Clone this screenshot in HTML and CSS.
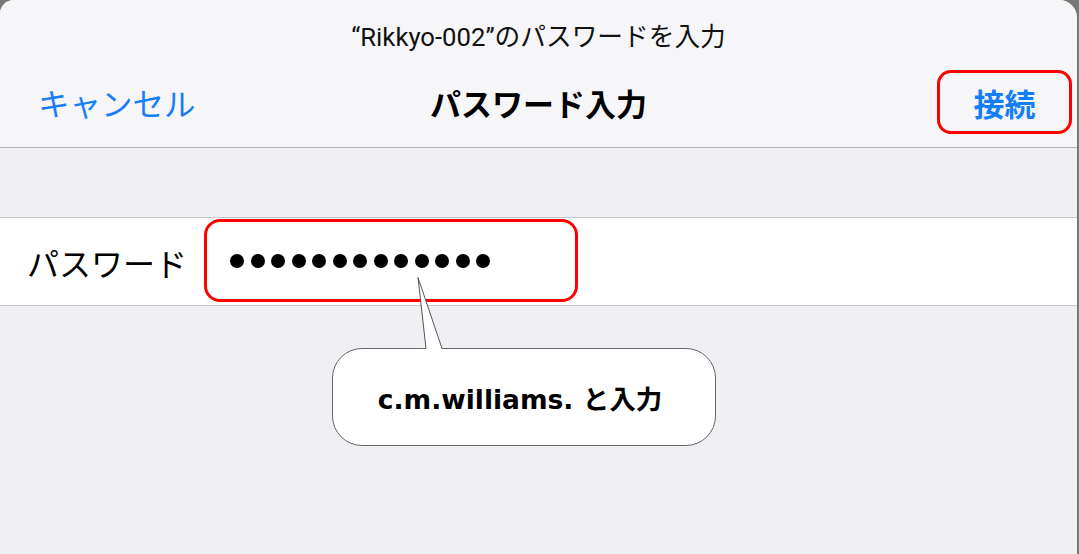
FILE: index.html
```html
<!DOCTYPE html>
<html lang="ja">
<head>
<meta charset="utf-8">
<title>パスワード入力</title>
<link rel="stylesheet" href="styles.css">
</head>
<body>
<div class="sheet">
  <header class="header">
    <div class="subtitle">“Rikkyo-002”のパスワードを入力</div>
    <div class="nav">
      <span class="cancel">キャンセル</span>
      <span class="title">パスワード入力</span>
      <span class="connect">接続</span>
    </div>
  </header>
  <div class="spacer"></div>
  <div class="row">
    <span class="label">パスワード</span>
    <div class="field">
      <span class="dot"></span><span class="dot"></span><span class="dot"></span><span class="dot"></span><span class="dot"></span><span class="dot"></span><span class="dot"></span><span class="dot"></span><span class="dot"></span><span class="dot"></span><span class="dot"></span><span class="dot"></span><span class="dot"></span>
    </div>
  </div>
  <div class="callout">c.m.williams. と入力</div>
  <svg class="tail" width="40" height="80" viewBox="0 0 40 80">
    <polygon points="3,0 11,72 27,72" fill="#fff"/>
    <polyline points="11,71.5 3,0.5 27,71.5" fill="none" stroke="#555" stroke-width="1"/>
  </svg>
</div>
</body>
</html>
```
FILE: styles.css
```css
html, body {
  margin: 0;
  padding: 0;
}
body {
  background: #777777;
  width: 1079px;
  height: 554px;
  overflow: hidden;
  font-family: Roboto, "Noto Sans CJK JP", sans-serif;
}
.sheet {
  position: relative;
  width: 1077px;
  height: 554px;
  background: #efeff4;
  border-top-left-radius: 14px;
  border-top-right-radius: 18px;
  overflow: hidden;
}
.header {
  background: #f6f6f8;
  height: 147px;
  border-bottom: 1px solid #b4b4b6;
  box-sizing: content-box;
  display: flex;
  flex-direction: column;
}
.subtitle {
  margin-top: 20px;
  height: 34px;
  line-height: 34px;
  text-align: center;
  font-size: 25.7px;
  color: #111;
}
.nav {
  margin-top: 16px;
  height: 64px;
  display: grid;
  grid-template-columns: 1fr auto 1fr;
  align-items: center;
  padding: 0 5px;
}
.cancel {
  justify-self: start;
  margin-left: 33px;
  color: #167efb;
  font-size: 31.5px;
}
.title {
  font-size: 31px;
  font-weight: 700;
  color: #000;
}
.connect {
  justify-self: end;
  box-sizing: border-box;
  width: 135px;
  height: 64px;
  border: 3px solid #ff0000;
  border-radius: 14px;
  display: flex;
  align-items: center;
  justify-content: center;
  color: #167efb;
  font-size: 31px;
  font-weight: 700;
}
.spacer {
  height: 69px;
}
.row {
  background: #fff;
  border-top: 1px solid #c8c7cc;
  border-bottom: 1px solid #c8c7cc;
  height: 87px;
  display: flex;
  align-items: flex-start;
  padding-left: 27px;
}
.label {
  align-self: center;
  font-size: 32px;
  color: #000;
  margin-right: 17px;
}
.field {
  box-sizing: border-box;
  margin-top: 1px;
  width: 374px;
  height: 83px;
  border: 3px solid #ff0000;
  border-radius: 16px;
  display: flex;
  align-items: center;
  gap: 6.5px;
  padding-left: 23px;
}
.dot {
  width: 14px;
  height: 14px;
  border-radius: 50%;
  background: #000;
}
.callout {
  position: absolute;
  left: 332px;
  top: 348px;
  box-sizing: border-box;
  width: 384px;
  height: 98px;
  border: 1px solid #666;
  border-radius: 30px;
  background: #fff;
  display: flex;
  align-items: center;
  justify-content: center;
  font-family: "DejaVu Sans", "Noto Sans CJK JP", sans-serif;
  font-weight: 700;
  font-size: 26.5px;
  color: #000;
  padding-right: 8px;
}
.tail {
  position: absolute;
  left: 415px;
  top: 277px;
}
```
